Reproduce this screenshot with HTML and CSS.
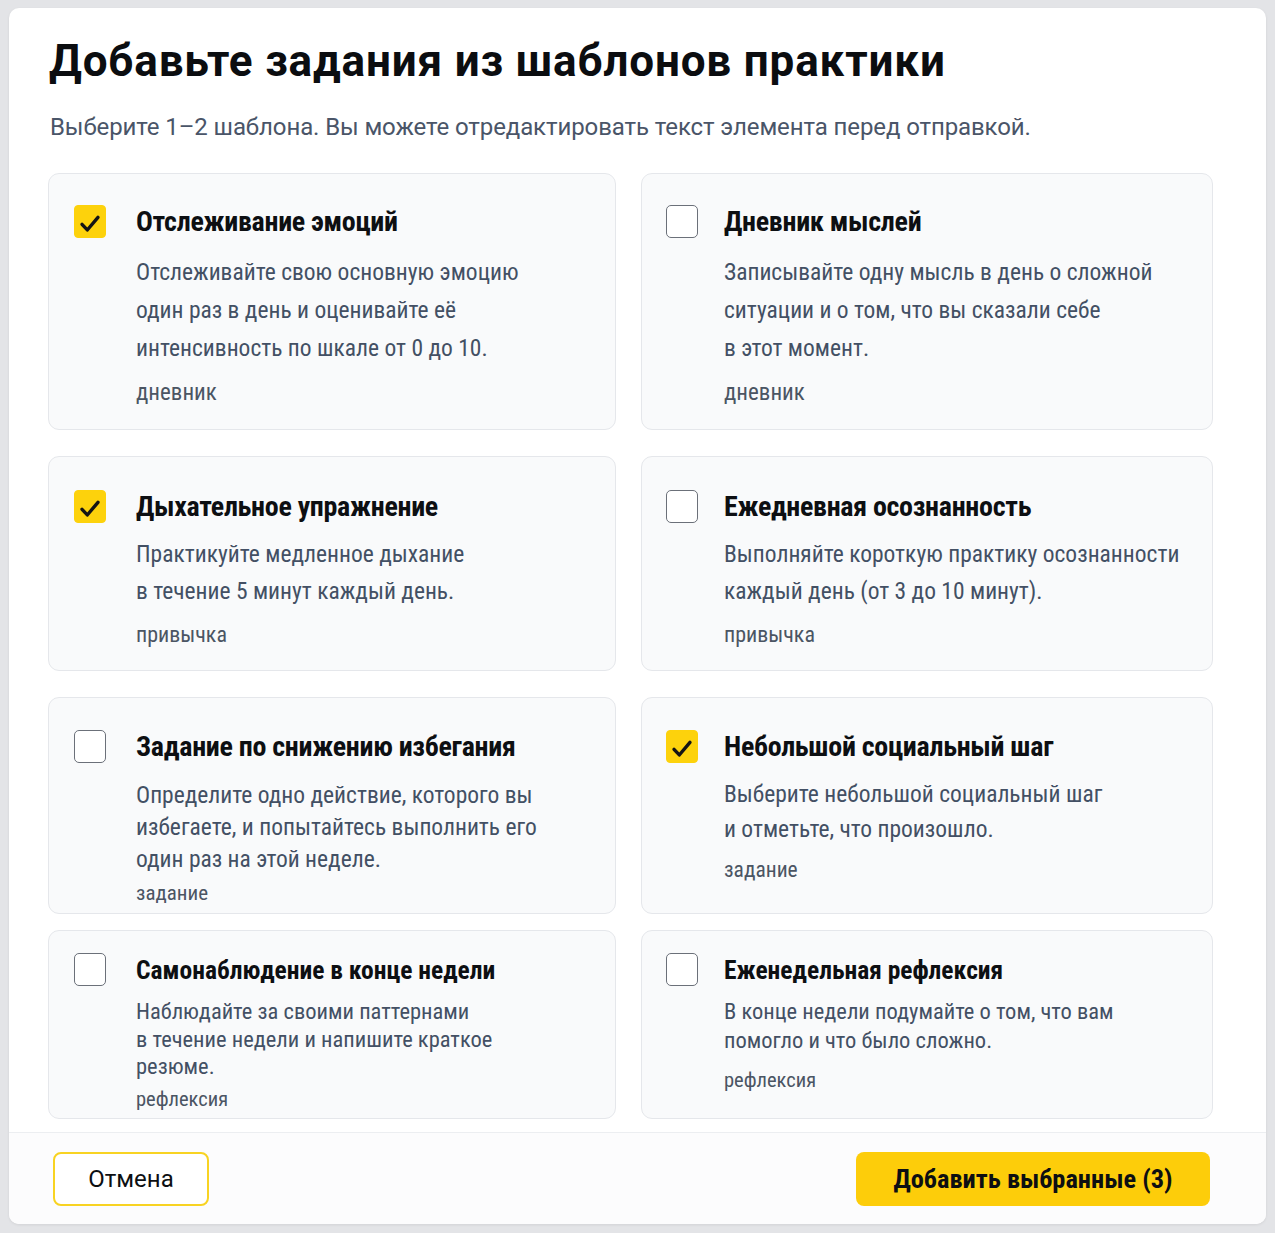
FILE: index.html
```html
<!DOCTYPE html>
<html lang="ru">
<head>
<meta charset="utf-8">
<title>Добавьте задания из шаблонов практики</title>
<link rel="stylesheet" href="styles.css">
</head>
<body>
<div class="modal">
  <div class="modal-body">
    <h1 class="title">Добавьте задания из шаблонов практики</h1>
    <p class="subtitle">Выберите 1–2 шаблона. Вы можете отредактировать текст элемента перед отправкой.</p>

    <div class="row row--1">
      <div class="card card--r1">
        <span class="check check--on"><svg viewBox="0 0 32 32"><path d="M7.5 18.5l5.6 6L24.5 11"/></svg></span>
        <div class="card-text">
          <div class="card-title">Отслеживание эмоций</div>
          <div class="card-desc">Отслеживайте свою основную эмоцию<br>один раз в день и оценивайте её<br>интенсивность по шкале от 0 до 10.</div>
          <div class="card-tag">дневник</div>
        </div>
      </div>
      <div class="card card--r1">
        <span class="check"></span>
        <div class="card-text">
          <div class="card-title">Дневник мыслей</div>
          <div class="card-desc">Записывайте одну мысль в день о сложной<br>ситуации и о том, что вы сказали себе<br>в этот момент.</div>
          <div class="card-tag">дневник</div>
        </div>
      </div>
    </div>

    <div class="row row--2">
      <div class="card card--r2">
        <span class="check check--on"><svg viewBox="0 0 32 32"><path d="M7.5 18.5l5.6 6L24.5 11"/></svg></span>
        <div class="card-text">
          <div class="card-title">Дыхательное упражнение</div>
          <div class="card-desc">Практикуйте медленное дыхание<br>в течение 5 минут каждый день.</div>
          <div class="card-tag">привычка</div>
        </div>
      </div>
      <div class="card card--r2">
        <span class="check"></span>
        <div class="card-text">
          <div class="card-title">Ежедневная осознанность</div>
          <div class="card-desc">Выполняйте короткую практику осознанности<br>каждый день (от 3 до 10 минут).</div>
          <div class="card-tag">привычка</div>
        </div>
      </div>
    </div>

    <div class="row row--3">
      <div class="card card--r3a">
        <span class="check"></span>
        <div class="card-text">
          <div class="card-title">Задание по снижению избегания</div>
          <div class="card-desc">Определите одно действие, которого вы<br>избегаете, и попытайтесь выполнить его<br>один раз на этой неделе.</div>
          <div class="card-tag">задание</div>
        </div>
      </div>
      <div class="card card--r3b">
        <span class="check check--on"><svg viewBox="0 0 32 32"><path d="M7.5 18.5l5.6 6L24.5 11"/></svg></span>
        <div class="card-text">
          <div class="card-title">Небольшой социальный шаг</div>
          <div class="card-desc">Выберите небольшой социальный шаг<br>и отметьте, что произошло.</div>
          <div class="card-tag">задание</div>
        </div>
      </div>
    </div>

    <div class="row row--4">
      <div class="card card--r4a">
        <span class="check"></span>
        <div class="card-text">
          <div class="card-title">Самонаблюдение в конце недели</div>
          <div class="card-desc">Наблюдайте за своими паттернами<br>в течение недели и напишите краткое<br>резюме.</div>
          <div class="card-tag">рефлексия</div>
        </div>
      </div>
      <div class="card card--r4b">
        <span class="check"></span>
        <div class="card-text">
          <div class="card-title">Еженедельная рефлексия</div>
          <div class="card-desc">В конце недели подумайте о том, что вам<br>помогло и что было сложно.</div>
          <div class="card-tag">рефлексия</div>
        </div>
      </div>
    </div>
  </div>

  <div class="modal-footer">
    <button class="btn btn--ghost" type="button">Отмена</button>
    <button class="btn btn--primary" type="button">Добавить выбранные (3)</button>
  </div>
</div>
</body>
</html>
```

FILE: styles.css
```css
* { box-sizing: border-box; }

html, body {
  margin: 0;
  background: #e3e4e7;
}

body {
  padding: 8px 9px 9px 9px;
  font-family: "Roboto Condensed", Roboto, "Liberation Sans", Arial, sans-serif;
  color: #111418;
}

.modal {
  background: #ffffff;
  border-radius: 10px;
  height: 1216px;
  box-shadow: 0 1px 3px rgba(0, 0, 0, 0.08);
  display: flex;
  flex-direction: column;
  overflow: hidden;
}

.modal-body {
  padding: 27px 53px 0 39px;
  flex: 1;
}

.title {
  margin: 0 0 0 1px;
  font-family: Roboto, "Liberation Sans", Arial, sans-serif;
  font-size: 44px;
  line-height: 52px;
  font-weight: 700;
  color: #0b0d10;
  letter-spacing: 0.85px;
}

.subtitle {
  margin: 24px 0 0 2px;
  font-family: Roboto, "Liberation Sans", Arial, sans-serif;
  font-size: 24px;
  line-height: 32px;
  color: #4a5568;
  letter-spacing: -0.1px;
}

.row {
  display: grid;
  grid-template-columns: 568px 572px;
  column-gap: 25px;
}

.row--1 { margin-top: 30px; }
.row--2, .row--3 { margin-top: 26px; }
.row--4 { margin-top: 16px; }

.card {
  display: flex;
  align-items: flex-start;
  gap: 30px;
  padding: 31px 20px 23px 25px;
  background: #f9fafb;
  border: 1px solid #e5e7eb;
  border-radius: 11px;
}

.card + .card {
  gap: 26px;
  padding-left: 24px;
}

.check {
  flex: none;
  width: 32px;
  height: 33px;
  border: 1.5px solid #6b7079;
  border-radius: 5px;
  background: #ffffff;
  display: flex;
  align-items: center;
  justify-content: center;
}

.check--on {
  background: #fdd20c;
  border-color: #fdd20c;
  border-radius: 4px;
}

.check svg {
  width: 32px;
  height: 32px;
  fill: none;
  stroke: #141414;
  stroke-width: 3.6;
  stroke-linecap: round;
  stroke-linejoin: round;
}

.card-text {
  display: flex;
  flex-direction: column;
  white-space: nowrap;
}

.card-title {
  font-size: 28px;
  line-height: 34px;
  font-weight: 700;
  color: #0d0f12;
  letter-spacing: -0.3px;
}

.card-desc {
  margin-top: 14px;
  font-size: 23.5px;
  line-height: 38px;
  color: #435064;
}

.card-tag {
  margin-top: 13px;
  font-size: 23px;
  line-height: 26px;
  color: #4b5563;
}

/* row-specific rhythm */
.card--r2 { padding-top: 33px; padding-bottom: 22px; }
.card--r2 .card-desc { margin-top: 12px; line-height: 37px; }
.card--r2 .card-tag { margin-top: 12px; font-size: 22px; }

.card--r3a, .card--r3b { padding-top: 32px; padding-bottom: 8px; }
.card--r3a .card-desc { margin-top: 15px; line-height: 32px; }
.card--r3a .card-tag { margin-top: 6px; font-size: 21px; line-height: 24px; }
.card--r3b .card-desc { margin-top: 13px; line-height: 35px; }
.card--r3b .card-tag { margin-top: 11px; font-size: 21.5px; line-height: 24px; }

.card--r4a, .card--r4b { padding-top: 22px; padding-bottom: 7.5px; }
.card--r4a .card-title, .card--r4b .card-title { font-size: 25.5px; letter-spacing: 0; }
.card--r4a .card-desc { margin-top: 11px; font-size: 22.5px; line-height: 27.5px; }
.card--r4a .card-tag { margin-top: 6px; font-size: 20.5px; line-height: 24px; }
.card--r4b .card-desc { margin-top: 10px; font-size: 22.5px; line-height: 29px; }
.card--r4b .card-tag { margin-top: 13px; font-size: 20.5px; line-height: 24px; }

.modal-footer {
  flex: none;
  height: 92px;
  border-top: 1px solid #eceef1;
  background: #fcfcfd;
  display: flex;
  align-items: center;
  justify-content: space-between;
  padding: 0 56px 0 44px;
}

.btn {
  height: 54px;
  border-radius: 8px;
  color: #0d0f12;
  cursor: pointer;
}

.btn--ghost {
  width: 156px;
  background: #ffffff;
  border: 2px solid #f8d322;
  font-family: Roboto, "Liberation Sans", Arial, sans-serif;
  font-size: 24px;
  font-weight: 400;
}

.btn--primary {
  width: 354px;
  background: #fdcd0a;
  border: none;
  font-family: "Roboto Condensed", Roboto, Arial, sans-serif;
  font-size: 26.4px;
  font-weight: 700;
}
```
